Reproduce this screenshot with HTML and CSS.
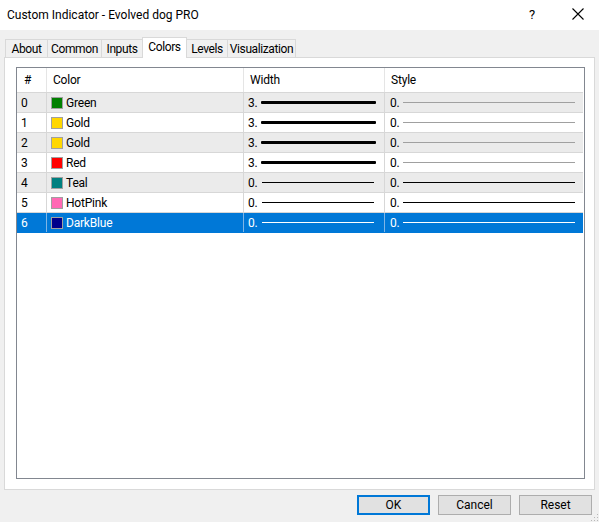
FILE: index.html
```html
<!DOCTYPE html>
<html>
<head>
<meta charset="utf-8">
<link rel="stylesheet" href="styles.css">
</head>
<body>
<div class="window">
  <div class="titlebar">
    <span class="title">Custom Indicator - Evolved dog PRO</span>
    <span class="help">?</span>
    <span class="close"><svg width="12" height="12" viewBox="0 0 12 12"><path d="M0.5 0.5L11.5 11.5M11.5 0.5L0.5 11.5" stroke="#000" stroke-width="1.1" fill="none"/></svg></span>
  </div>
  <div class="content">
    <div class="tabs">
      <div class="tab t-about">About</div>
      <div class="tab t-common">Common</div>
      <div class="tab t-inputs">Inputs</div>
      <div class="tab t-colors active">Colors</div>
      <div class="tab t-levels">Levels</div>
      <div class="tab t-vis">Visualization</div>
    </div>
    <div class="panel">
      <div class="list">
        <div class="row head">
          <div class="cell c-num">#</div>
          <div class="cell c-color">Color</div>
          <div class="cell c-width">Width</div>
          <div class="cell c-style">Style</div>
        </div>
        <div class="row alt">
          <div class="cell c-num">0</div>
          <div class="cell c-color"><span class="sw green"></span>Green</div>
          <div class="cell c-width"><span class="v">3.</span><span class="wl thick"></span></div>
          <div class="cell c-style"><span class="v">0.</span><span class="sl gray"></span></div>
        </div>
        <div class="row">
          <div class="cell c-num">1</div>
          <div class="cell c-color"><span class="sw gold"></span>Gold</div>
          <div class="cell c-width"><span class="v">3.</span><span class="wl thick"></span></div>
          <div class="cell c-style"><span class="v">0.</span><span class="sl gray"></span></div>
        </div>
        <div class="row alt">
          <div class="cell c-num">2</div>
          <div class="cell c-color"><span class="sw gold"></span>Gold</div>
          <div class="cell c-width"><span class="v">3.</span><span class="wl thick"></span></div>
          <div class="cell c-style"><span class="v">0.</span><span class="sl gray"></span></div>
        </div>
        <div class="row">
          <div class="cell c-num">3</div>
          <div class="cell c-color"><span class="sw red"></span>Red</div>
          <div class="cell c-width"><span class="v">3.</span><span class="wl thick"></span></div>
          <div class="cell c-style"><span class="v">0.</span><span class="sl gray"></span></div>
        </div>
        <div class="row alt">
          <div class="cell c-num">4</div>
          <div class="cell c-color"><span class="sw teal"></span>Teal</div>
          <div class="cell c-width"><span class="v">0.</span><span class="wl thin"></span></div>
          <div class="cell c-style"><span class="v">0.</span><span class="sl"></span></div>
        </div>
        <div class="row">
          <div class="cell c-num">5</div>
          <div class="cell c-color"><span class="sw pink"></span>HotPink</div>
          <div class="cell c-width"><span class="v">0.</span><span class="wl thin"></span></div>
          <div class="cell c-style"><span class="v">0.</span><span class="sl"></span></div>
        </div>
        <div class="row selected">
          <div class="cell c-num">6</div>
          <div class="cell c-color"><span class="sw darkblue"></span>DarkBlue</div>
          <div class="cell c-width"><span class="v">0.</span><span class="wl thin"></span></div>
          <div class="cell c-style"><span class="v">0.</span><span class="sl"></span></div>
        </div>
      </div>
    </div>
    <div class="footer">
      <button class="btn default">OK</button>
      <button class="btn">Cancel</button>
      <button class="btn">Reset</button>
    </div>
    <svg class="grip" width="10" height="10" viewBox="0 0 10 10">
      <rect x="8" y="2" width="1" height="1" fill="#b8b8b8"/>
      <rect x="5" y="5" width="1" height="1" fill="#b8b8b8"/>
      <rect x="8" y="5" width="1" height="1" fill="#b8b8b8"/>
      <rect x="2" y="8" width="1" height="1" fill="#b8b8b8"/>
      <rect x="5" y="8" width="1" height="1" fill="#b8b8b8"/>
      <rect x="8" y="8" width="1" height="1" fill="#b8b8b8"/>
    </svg>
  </div>
</div>
</body>
</html>
```
FILE: styles.css
```css
* { box-sizing: border-box; }
html, body { margin: 0; padding: 0; }
body {
  width: 599px;
  height: 522px;
  overflow: hidden;
  font-family: Roboto, "Liberation Sans", Arial, sans-serif;
  font-size: 12px;
  color: #000;
  background: #f0f0f0;
}
.window { width: 599px; height: 522px; display: flex; flex-direction: column; }
.titlebar {
  height: 30px;
  background: #fff;
  display: flex;
  align-items: center;
  padding-left: 7px;
}
.title { font-size: 12px; flex: 1; padding-bottom: 1px; }
.help { width: 10px; font-size: 13px; margin-right: 33px; padding-bottom: 2px; }
.close { width: 12px; height: 12px; margin-right: 15px; display: flex; margin-top: -2px; }
.content { position: relative; flex: 1; background: #f0f0f0; }
.tabs {
  display: flex;
  align-items: flex-end;
  height: 20px;
  margin-top: 7px;
  margin-left: 5px;
}
.tab {
  height: 18px;
  border: 1px solid #d9d9d9;
  border-bottom: none;
  background: #f0f0f0;
  display: flex;
  align-items: center;
  justify-content: center;
  margin-left: -1px;
  padding-top: 1px;
  letter-spacing: -0.4px;
}
.tab:first-child { margin-left: 0; }
.tab.active {
  height: 21px;
  background: #fff;
  margin-bottom: -1px;
  position: relative;
  z-index: 2;
  padding-top: 0;
  padding-bottom: 3px;
}
.t-about { width: 43px; }
.t-common { width: 55px; }
.t-inputs { width: 42px; }
.t-colors { width: 45px; }
.t-levels { width: 42px; }
.t-vis { width: 69px; }
.panel {
  margin-left: 4px;
  width: 591px;
  height: 433px;
  background: #fff;
  border: 1px solid #d9d9d9;
  padding: 9px 9px 10px 11px;
}
.list {
  width: 569px;
  height: 412px;
  border: 1px solid #828790;
  background: #fff;
  padding-right: 1px;
}
.row {
  display: grid;
  grid-template-columns: 30px 197px 141px 1fr;
  height: 20px;
  border-bottom: 1px solid #d7d7d7;
  letter-spacing: -0.2px;
}
.row.head { height: 25px; border-bottom: 1px solid #d7d7d7; }
.row.alt { background: #ebebeb; }
.row.selected { background: #0078d7; color: #fff; border-bottom-color: #0078d7; }
.cell {
  display: flex;
  align-items: center;
  border-right: 1px solid #d7d7d7;
  white-space: nowrap;
  overflow: hidden;
}
.head .cell { border-right-color: #e5e5e5; padding-bottom: 1px; }
.cell.c-style { border-right: none; }
.c-num { padding-left: 4px; }
.head .c-num { padding-left: 7px; }
.c-color { padding-left: 4px; }
.head .c-color { padding-left: 6px; }
.c-width { padding-left: 4px; }
.head .c-width { padding-left: 6px; }
.c-style { padding-left: 5px; }
.head .c-style { padding-left: 6px; }
.selected .cell { border-right-color: #7fb5e6; }
.sw {
  width: 12px;
  height: 12px;
  border: 1px solid #a0a0a0;
  margin-right: 3px;
  flex: none;
}
.green { background: #008000; }
.gold { background: #ffd700; }
.red { background: #ff0000; }
.teal { background: #008080; }
.pink { background: #ff69b4; }
.darkblue { background: #00008b; }
.v { width: 13px; flex: none; }
.wl { display: block; flex: none; margin-left: 0; background: #000; }
.wl.thick { width: 115px; height: 3px; border-radius: 1px; }
.wl.thin { width: 112px; height: 1px; margin-left: 1px; }
.sl { display: block; width: 172px; height: 1px; background: #000; flex: none; }
.sl.gray { background: #a0a0a0; }
.selected .wl, .selected .sl { background: #fff; }
.footer {
  display: flex;
  justify-content: flex-end;
  gap: 8px;
  margin-top: 5px;
  padding-right: 7px;
}
.btn {
  width: 73px;
  height: 20px;
  background: #e1e1e1;
  border: 1px solid #adadad;
  font-family: Roboto, "Liberation Sans", Arial, sans-serif;
  font-size: 12px;
  color: #000;
  padding: 0;
  margin: 0;
}
.btn.default { border: 2px solid #0078d7; }
.grip { position: absolute; right: 0; bottom: 0; }
```
